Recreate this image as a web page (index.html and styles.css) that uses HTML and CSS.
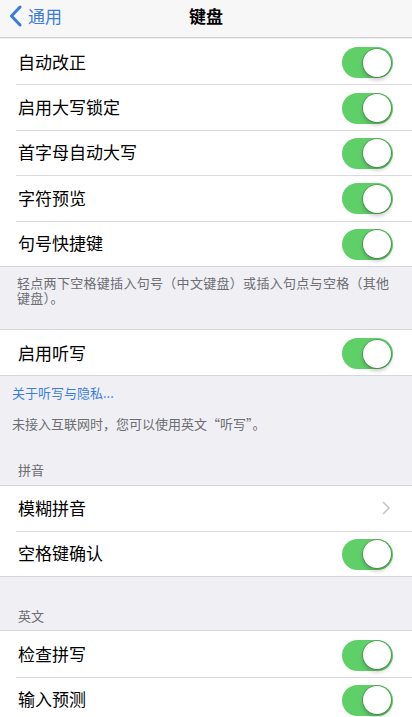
FILE: index.html
```html
<!DOCTYPE html>
<html lang="zh">
<head>
<meta charset="utf-8">
<link rel="stylesheet" href="styles.css">
</head>
<body>
<div class="page">
  <header class="nav">
    <div class="back">
      <svg class="back-chev" width="13" height="22" viewBox="0 0 13 22"><path d="M11 2 L2.5 11 L11 20" fill="none" stroke="#3a7bdc" stroke-width="3" stroke-linecap="round" stroke-linejoin="round"/></svg>
      <span>通用</span>
    </div>
    <div class="title">键盘</div>
  </header>

  <section class="group g1">
    <div class="row"><span class="label">自动改正</span><span class="toggle"><span class="knob"></span></span></div>
    <div class="row"><span class="label">启用大写锁定</span><span class="toggle"><span class="knob"></span></span></div>
    <div class="row"><span class="label">首字母自动大写</span><span class="toggle"><span class="knob"></span></span></div>
    <div class="row"><span class="label">字符预览</span><span class="toggle"><span class="knob"></span></span></div>
    <div class="row"><span class="label">句号快捷键</span><span class="toggle"><span class="knob"></span></span></div>
  </section>
  <p class="footer f1">轻点两下空格键插入句号（中文键盘）或插入句点与空格（其他键盘）。</p>

  <section class="group">
    <div class="row"><span class="label">启用听写</span><span class="toggle"><span class="knob"></span></span></div>
  </section>
  <p class="link">关于听写与隐私...</p>
  <p class="note">未接入互联网时，您可以使用英文“听写”。</p>

  <p class="section-head h1">拼音</p>
  <section class="group">
    <div class="row r45"><span class="label">模糊拼音</span>
      <svg class="chev" width="9" height="14" viewBox="0 0 9 14"><path d="M1.5 1.5 L7 7 L1.5 12.5" fill="none" stroke="#c4c4c9" stroke-width="1.6" stroke-linecap="round" stroke-linejoin="round"/></svg>
    </div>
    <div class="row r45"><span class="label">空格键确认</span><span class="toggle"><span class="knob"></span></span></div>
  </section>

  <p class="section-head h2">英文</p>
  <section class="group">
    <div class="row"><span class="label">检查拼写</span><span class="toggle"><span class="knob"></span></span></div>
    <div class="row"><span class="label">输入预测</span><span class="toggle"><span class="knob"></span></span></div>
  </section>
</div>
</body>
</html>
```

FILE: styles.css
```css
html, body {
  margin: 0;
  padding: 0;
  background: #efeff4;
}
body {
  font-family: "Noto Sans CJK SC", "Noto Sans", sans-serif;
  color: #000;
}
.page {
  width: 412px;
  height: 717px;
  overflow: hidden;
  background: #efeff4;
}
.nav {
  height: 37px;
  background: #f7f7f8;
  border-bottom: 1px solid #cfcfd3;
  display: flex;
  align-items: center;
  justify-content: center;
  position: relative;
  margin-bottom: 1px;
}
.back {
  position: absolute;
  left: 9px;
  top: 4px;
  display: flex;
  align-items: center;
  gap: 6px;
  color: #3a7bdc;
  font-size: 17px;
  line-height: 24px;
}
.title {
  font-size: 17px;
  font-weight: 700;
  line-height: 24px;
  margin-top: -5px;
}
.group {
  background: #fff;
  border-top: 0.5px solid #d6d6da;
  border-bottom: 0.5px solid #d6d6da;
}
.g1 {
  border-top: none;
}
.row {
  height: 45.4px;
  display: flex;
  align-items: center;
  justify-content: space-between;
  padding: 0 19px 0 18px;
  position: relative;
}
.row.r45 {
  height: 45px;
}
.row + .row::before {
  content: "";
  position: absolute;
  left: 16px;
  right: 0;
  top: 0;
  border-top: 0.5px solid #d9d9dd;
}
.label {
  font-size: 17px;
  line-height: 24px;
}
.toggle {
  width: 51px;
  height: 31px;
  border-radius: 16px;
  background: #5fcf68;
  display: flex;
  justify-content: flex-end;
  align-items: center;
  padding-right: 2px;
  box-sizing: border-box;
  margin-top: 2px;
}
.knob {
  width: 28px;
  height: 28px;
  border-radius: 50%;
  background: #fff;
  box-shadow: 0 0 0 0.8px rgba(60, 90, 60, 0.45), 0 3px 4px rgba(0, 0, 0, 0.22);
}
.chev {
  margin-right: 2px;
}
.footer, .link, .note, .section-head {
  margin: 0;
  font-size: 13px;
  line-height: 15.5px;
  color: #6d6d72;
}
.f1 {
  padding: 8px 14px 23px 17px;
  letter-spacing: 0.3px;
}
.link {
  color: #3b7ee0;
  padding: 9px 12px 0 12px;
}
.note {
  padding: 15px 12px 0 12px;
}
.section-head.h1 {
  padding: 31px 18px 7px 18px;
}
.section-head.h2 {
  padding: 31px 18px 7px 18px;
}
```
